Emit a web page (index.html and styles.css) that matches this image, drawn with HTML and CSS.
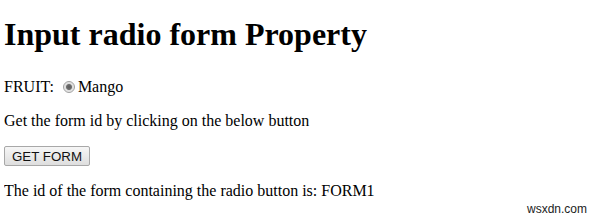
FILE: index.html
```html
<!DOCTYPE html>
<html lang="en">

<head>
    <meta charset="UTF-8">
    <title>Input radio form Property</title>
    <link rel="stylesheet" href="styles.css">
</head>

<body>
    <h1>Input radio form Property</h1>
    <form id="FORM1">
        FRUIT: <input type="radio" name="fruit" id="mango" class="radio" checked><label for="mango">Mango</label>
    </form>
    <p>Get the form id by clicking on the below button</p>
    <button class="get_btn">GET FORM</button>
    <p class="result">The id of the form containing the radio button is: FORM1</p>
    <span class="mark">wsxdn.com</span>
</body>

</html>
```

FILE: styles.css
```css
body {
    font-family: "Liberation Serif", serif;
    font-size: 16px;
    margin: 0 4px;
    color: #000;
}

h1 {
    font-size: 32px;
    margin: 16px 0 25px;
}

form {
    margin: 0;
}

.radio {
    appearance: none;
    width: 12px;
    height: 12px;
    margin: 0 3px 0 5px;
    border: 1px solid #a0a0a0;
    border-radius: 50%;
    background: radial-gradient(circle, #5c5c5c 0, #6e6e6e 2.5px, #dcdcdc 3.5px, #f2f2f2 6px);
    vertical-align: -1px;
    box-sizing: border-box;
}

.get_btn {
    font-family: "Liberation Sans", sans-serif;
    font-size: 13.33px;
    color: #111;
    width: 86px;
    height: 20px;
    padding: 0;
    border: 1px solid #a8a8a8;
    border-radius: 2px;
    background: linear-gradient(#f6f6f6, #dedede);
}

.mark {
    position: absolute;
    right: 12px;
    bottom: 3px;
    font-family: "Liberation Sans", sans-serif;
    font-size: 12px;
    color: #222;
}
```
